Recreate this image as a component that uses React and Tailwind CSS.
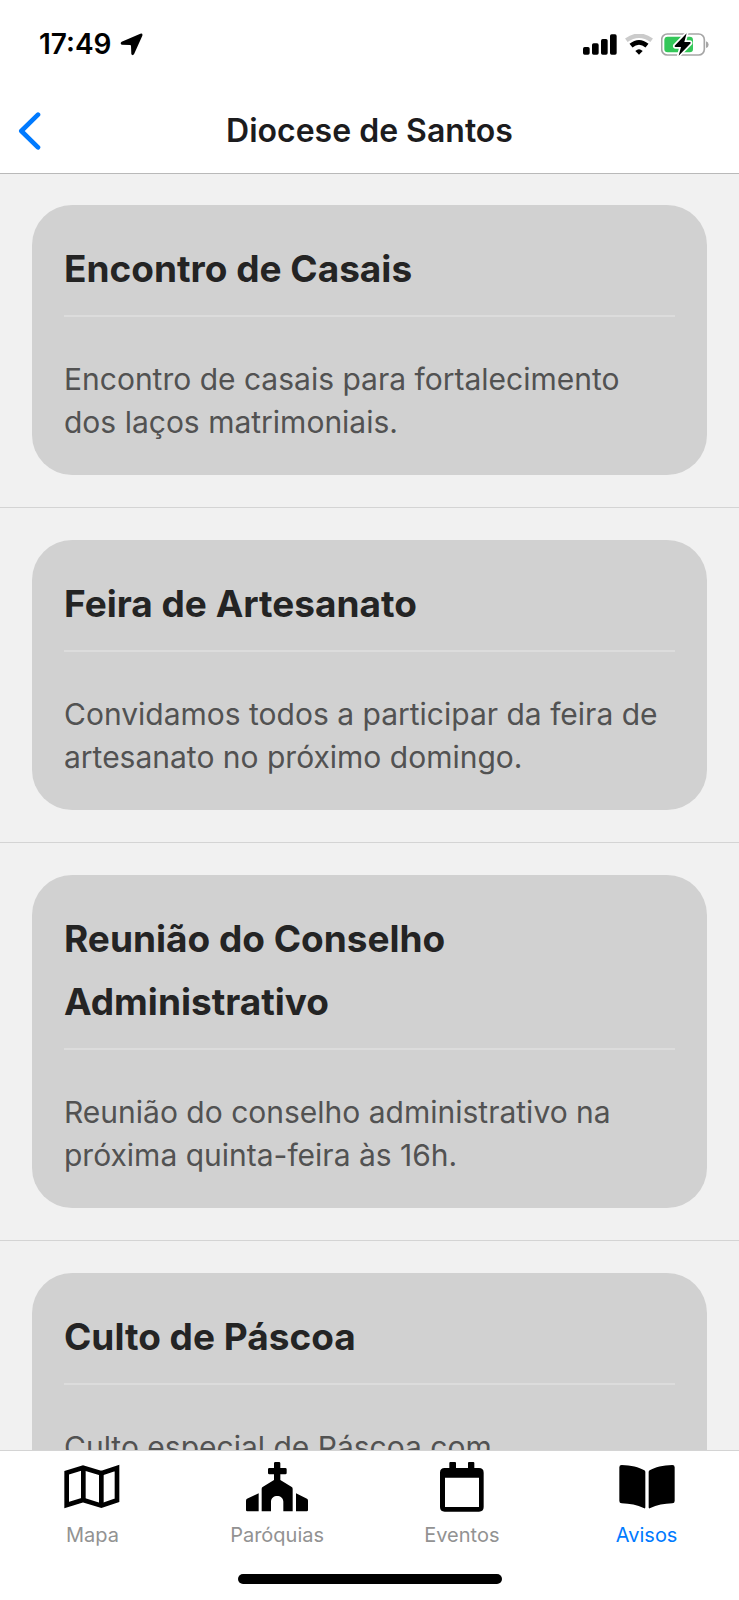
import React from "react";

const notices = [
  {
    title: "Encontro de Casais",
    text: "Encontro de casais para fortalecimento dos laços matrimoniais.",
  },
  {
    title: "Feira de Artesanato",
    text: "Convidamos todos a participar da feira de artesanato no próximo domingo.",
  },
  {
    title: "Reunião do Conselho Administrativo",
    text: "Reunião do conselho administrativo na próxima quinta-feira às 16h.",
  },
  { title: "Culto de Páscoa", text: "Culto especial de Páscoa com" },
];

function MapIcon() {
  return (
    <svg viewBox="0 0 192 156" className="h-[52px] w-16" aria-hidden="true">
      <g fill="none" stroke="#000" strokeWidth="14">
        <path d="M20 35L69 20L124 37L171 21V118L124 134L69 117L20 132Z" />
        <path d="M70 20V117M124 37V134" />
      </g>
    </svg>
  );
}

function ChurchIcon() {
  return (
    <svg viewBox="0 0 192 156" className="h-[52px] w-16" aria-hidden="true">
      <path d="M91 3H102Q106 3 106 7V21H121Q125 21 125 25V36Q125 40 121 40H106V57L139 77Q143 79 143 83V151H115V122C115 99 78 99 78 122V151H50V83Q50 79 54 77L87 57V40H73Q69 40 69 36V25Q69 21 73 21H87V7Q87 3 91 3Z" />
      <path d="M41 97V151H7Q3 151 3 147V119Q3 115 6 113Z" />
      <path d="M153 97V151H185Q189 151 189 147V119Q189 115 186 113Z" />
    </svg>
  );
}

function CalendarIcon() {
  return (
    <svg viewBox="0 0 192 156" className="h-[52px] w-16" aria-hidden="true">
      <path
        fillRule="evenodd"
        d="M58 6Q58 3 61 3H75Q78 3 78 6V21H114V6Q114 3 117 3H130Q133 3 133 6V21H147Q161 21 161 35V138Q161 152 147 152H44Q30 152 30 138V35Q30 21 44 21H58ZM45 50V138H147V50Z"
      />
    </svg>
  );
}

function BookIcon() {
  return (
    <svg viewBox="0 0 192 156" className="h-[52px] w-16" aria-hidden="true">
      <path d="M20 12C48 13 72 18 88 28Q91 30 91 33V139Q91 144 86 141C67 132 44 128 20 127Q13 127 13 120V19Q13 12 20 12Z" />
      <path d="M172 12C144 13 120 18 104 28Q101 30 101 33V139Q101 144 106 141C125 132 148 128 172 127Q179 127 179 120V19Q179 12 172 12Z" />
    </svg>
  );
}

const tabs = [
  { label: "Mapa", Icon: MapIcon },
  { label: "Paróquias", Icon: ChurchIcon },
  { label: "Eventos", Icon: CalendarIcon },
  { label: "Avisos", Icon: BookIcon, active: true },
];

function StatusBar() {
  return (
    <div className="flex h-[88px] items-center justify-between pr-[30px] pl-[39px]">
      <div className="flex items-center gap-2">
        <span className="text-[28px] leading-8 font-semibold text-black">17:49</span>
        <svg viewBox="0 0 69 69" className="h-[23px] w-[23px]" aria-hidden="true">
          <path d="M61 2Q69 0 67 8L42 64Q38 69 34 64L33 39Q33 36 30 36L5 35Q-1 31 5 26Z" />
        </svg>
      </div>
      <div className="flex items-center gap-2">
        <svg viewBox="0 0 102 63" className="h-[21px] w-[34px]" aria-hidden="true">
          <rect x="0" y="39" width="20" height="23" rx="5" />
          <rect x="27" y="28" width="20" height="34" rx="5" />
          <rect x="54" y="15" width="20" height="47" rx="5" />
          <rect x="81" y="1" width="20" height="61" rx="5" />
        </svg>
        <svg viewBox="0 0 84 63" className="h-[21px] w-[28px]" aria-hidden="true">
          <path d="M4 19Q42 -9 80 19" fill="none" stroke="#cbcbcb" strokeWidth="13" />
          <path d="M18 35Q42 15 66 35" fill="none" stroke="#000" strokeWidth="14" />
          <path d="M31 51Q42 41 53 51L42 62Z" />
        </svg>
        <svg viewBox="0 0 144 69" className="h-[23px] w-[48px]" aria-hidden="true">
          <rect x="2" y="3" width="128" height="63" rx="17" fill="#fff" stroke="#a6a6a6" strokeWidth="5" />
          <path d="M135 25Q143 27 143 35Q143 43 135 45Z" fill="#a6a6a6" />
          <rect x="10" y="11" width="86" height="47" rx="10" fill="#34c759" />
          <path
            d="M77 1L41 38Q40 42 44 42H60L53 68L89 31Q90 27 86 27H70Z"
            stroke="#fff"
            strokeWidth="10"
            paintOrder="stroke"
          />
        </svg>
      </div>
    </div>
  );
}

export default function App() {
  return (
    <div className="flex h-screen flex-col bg-white font-['Inter','Liberation_Sans',sans-serif]">
      <header className="relative z-10 shrink-0 bg-white shadow-[0_1px_0_#b9b9b9]">
        <StatusBar />
        <div className="grid h-[85px] grid-cols-[1fr_auto_1fr] items-center px-[18px]">
          <button type="button" aria-label="Voltar" className="justify-self-start">
            <svg viewBox="0 0 69 114" className="h-[38px] w-[23px]" aria-hidden="true">
              <path
                d="M60 8L10 57L60 106"
                fill="none"
                stroke="#007aff"
                strokeWidth="14"
                strokeLinecap="round"
                strokeLinejoin="round"
              />
            </svg>
          </button>
          <h1 className="text-[32px] leading-10 font-semibold text-[#1c1c1e]">Diocese de Santos</h1>
        </div>
      </header>

      <main className="min-h-0 flex-1 overflow-hidden bg-[#f1f1f1]">
        <ul>
          {notices.map((notice) => (
            <li key={notice.title} className="border-b border-[#d4d4d4] px-8 py-8">
              <article className="rounded-[40px] bg-[#d1d1d1] px-8 pt-8 pb-[31px]">
                <h2 className="border-b-2 border-[#dcdcdc] pb-[15px] text-[37px] leading-[63px] font-bold text-[#242424]">
                  {notice.title}
                </h2>
                <p className="mt-[41px] text-[30px] leading-[43px] text-[#525252]">{notice.text}</p>
              </article>
            </li>
          ))}
        </ul>
      </main>

      <nav className="relative z-10 shrink-0 bg-white pt-[10px] pb-4 shadow-[0_-1px_0_#d4d4d4]">
        <ul className="grid grid-cols-4">
          {tabs.map(({ label, Icon, active }) => (
            <li key={label}>
              <a
                href="#"
                aria-current={active ? "page" : undefined}
                className={`flex flex-col items-center gap-2 text-[20px] leading-7 ${
                  active ? "text-[#007aff]" : "text-[#929292]"
                }`}
              >
                <Icon />
                {label}
              </a>
            </li>
          ))}
        </ul>
        <div className="mx-auto mt-[25px] h-[10px] w-[264px] rounded-full bg-black" />
      </nav>
    </div>
  );
}
